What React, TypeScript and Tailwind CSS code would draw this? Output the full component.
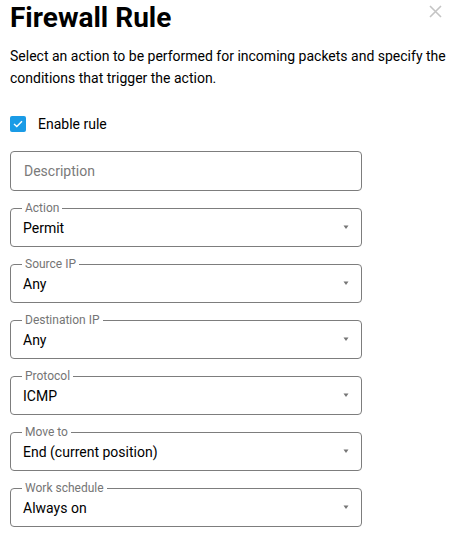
import { useState } from "react";

const fields = [
  { label: "Action", value: "Permit" },
  { label: "Source IP", value: "Any" },
  { label: "Destination IP", value: "Any" },
  { label: "Protocol", value: "ICMP" },
  { label: "Move to", value: "End (current position)" },
  { label: "Work schedule", value: "Always on" },
];

function SelectField({ label, value }: { label: string; value: string }) {
  return (
    <div className="relative h-[39px] w-[352px] rounded-[4px] border border-[#7d7d7d] flex items-center pl-[12px] pr-[10px]">
      <span className="absolute left-[11px] -top-[8px] bg-white px-[3px] text-[12px] leading-[14px] text-[#757575]">
        {label}
      </span>
      <span className="flex-1 text-[14px] text-black pt-[1px]">{value}</span>
      <svg width="8" height="5" viewBox="0 0 8 5" className="mr-[1px]">
        <path d="M1.5 0.5h5L4 4z" fill="#757575" />
      </svg>
    </div>
  );
}

export default function App() {
  const [enabled, setEnabled] = useState(true);

  return (
    <div className="relative w-[453px] h-[536px] bg-white pl-[10px] pr-[2px] font-['Roboto',sans-serif] overflow-hidden">
      {/* Close */}
      <button className="absolute right-[11px] top-[5px] text-[#c4c4c4]">
        <svg width="13" height="13" viewBox="0 0 13 13">
          <path d="M1 1l11 11M12 1L1 12" stroke="currentColor" strokeWidth="1.6" />
        </svg>
      </button>

      <h1 className="pt-[1px] text-[28px] leading-[34px] font-bold text-black">Firewall Rule</h1>

      <p className="mt-[10px] text-[14px] leading-[22px] text-black">
        Select an action to be performed for incoming packets and specify the conditions that
        trigger the action.
      </p>

      <label className="mt-[27px] flex h-[16px] items-center gap-[12px] cursor-pointer">
        <span
          onClick={() => setEnabled(!enabled)}
          className="w-[16px] h-[16px] rounded-[2px] bg-[#1a9be6] flex items-center justify-center"
        >
          {enabled && (
            <svg width="10" height="8" viewBox="0 0 10 8">
              <path d="M1 4l2.8 2.6L9 1.2" stroke="white" strokeWidth="1.4" fill="none" />
            </svg>
          )}
        </span>
        <span className="text-[14px] leading-[16px] text-black">Enable rule</span>
      </label>

      <div className="mt-[19px] flex flex-col gap-[17px]">
        <div className="h-[40px] w-[352px] rounded-[4px] border border-[#7d7d7d] flex items-center px-[13px]">
          <span className="text-[14px] text-[#7a7a7a]">Description</span>
        </div>
        {fields.map((f) => (
          <SelectField key={f.label} label={f.label} value={f.value} />
        ))}
      </div>
    </div>
  );
}
